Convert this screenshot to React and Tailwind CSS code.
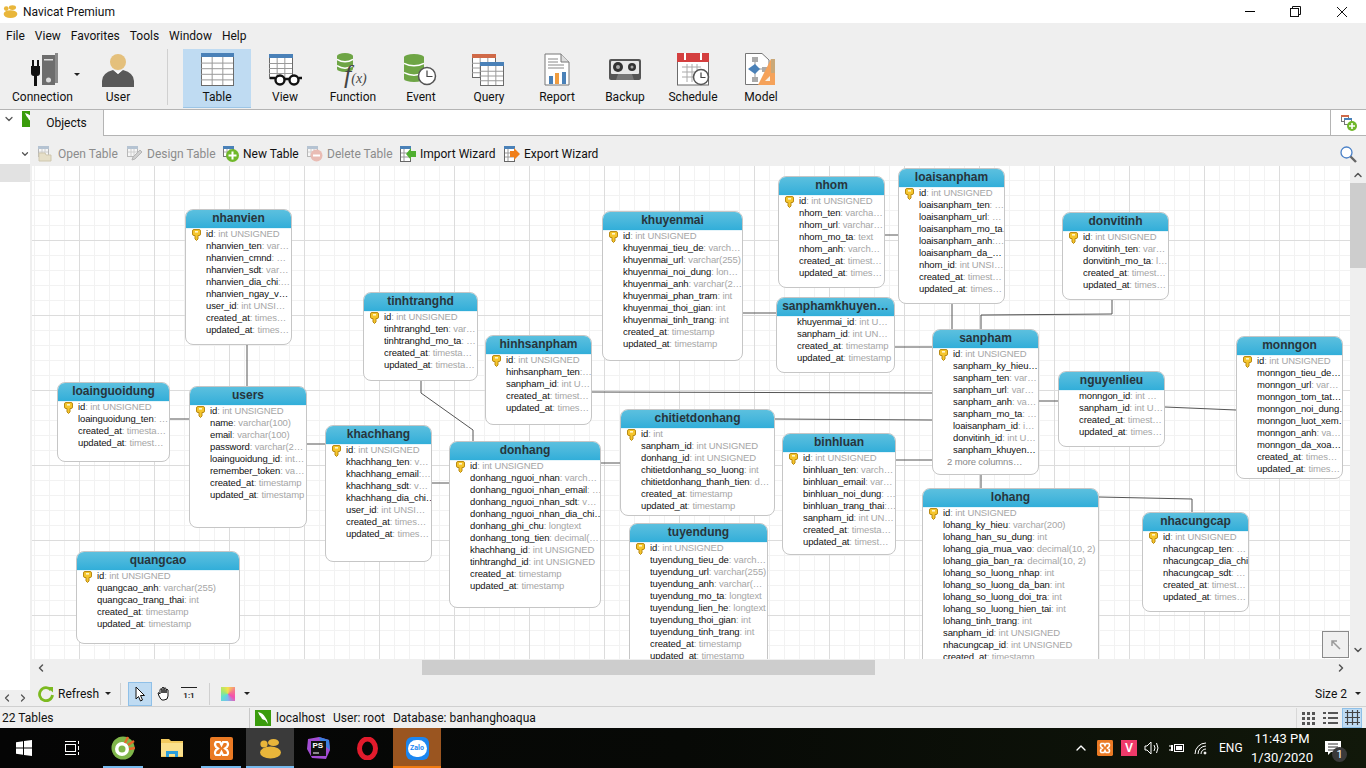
import React from "react";
import { ChevronDown, ChevronLeft, ChevronRight, ChevronUp } from "lucide-react";

const U = "id|: int UNSIGNED";

const NODES = [
  { t: "nhanvien", x: 185, y: 209, w: 107, h: 136, key: 1, rows: [U, "nhanvien_ten|: var…", "nhanvien_cmnd|: …", "nhanvien_sdt|: var…", "nhanvien_dia_chi|:…", "nhanvien_ngay_v…", "user_id|: int UNSI…", "created_at|: times…", "updated_at|: times…"] },
  { t: "loainguoidung", x: 57, y: 382, w: 113, h: 80, key: 1, rows: [U, "loainguoidung_ten|: …", "created_at|: timesta…", "updated_at|: timest…"] },
  { t: "users", x: 189, y: 386, w: 118, h: 142, key: 1, rows: [U, "name|: varchar(100)", "email|: varchar(100)", "password|: varchar(2…", "loainguoidung_id|: int…", "remember_token|: va…", "created_at|: timestamp", "updated_at|: timestamp"] },
  { t: "khachhang", x: 325, y: 425, w: 107, h: 137, key: 1, rows: [U, "khachhang_ten|: v…", "khachhang_email|:…", "khachhang_sdt|: v…", "khachhang_dia_chi…", "user_id|: int UNSI…", "created_at|: times…", "updated_at|: times…"] },
  { t: "quangcao", x: 76, y: 551, w: 164, h: 93, key: 1, rows: [U, "quangcao_anh|: varchar(255)", "quangcao_trang_thai|: int", "created_at|: timestamp", "updated_at|: timestamp"] },
  { t: "tinhtranghd", x: 363, y: 292, w: 115, h: 89, key: 1, rows: [U, "tinhtranghd_ten|: var…", "tinhtranghd_mo_ta|: …", "created_at|: timesta…", "updated_at|: timesta…"] },
  { t: "hinhsanpham", x: 485, y: 335, w: 107, h: 90, key: 1, rows: [U, "hinhsanpham_ten|:…", "sanpham_id|: int U…", "created_at|: timest…", "updated_at|: times…"] },
  { t: "khuyenmai", x: 602, y: 211, w: 141, h: 150, key: 1, rows: [U, "khuyenmai_tieu_de|: varch…", "khuyenmai_url|: varchar(255)", "khuyenmai_noi_dung|: lon…", "khuyenmai_anh|: varchar(2…", "khuyenmai_phan_tram|: int", "khuyenmai_thoi_gian|: int", "khuyenmai_tinh_trang|: int", "created_at|: timestamp", "updated_at|: timestamp"] },
  { t: "nhom", x: 778, y: 176, w: 107, h: 112, key: 1, rows: [U, "nhom_ten|: varcha…", "nhom_url|: varchar…", "nhom_mo_ta|: text", "nhom_anh|: varch…", "created_at|: timest…", "updated_at|: times…"] },
  { t: "sanphamkhuyen…", x: 776, y: 297, w: 119, h: 76, rows: ["khuyenmai_id|: int U…", "sanpham_id|: int UN…", "created_at|: timestamp", "updated_at|: timestamp"] },
  { t: "chitietdonhang", x: 620, y: 409, w: 155, h: 107, key: 1, rows: ["id|: int", "sanpham_id|: int UNSIGNED", "donhang_id|: int UNSIGNED", "chitietdonhang_so_luong|: int", "chitietdonhang_thanh_tien|: d…", "created_at|: timestamp", "updated_at|: timestamp"] },
  { t: "donhang", x: 449, y: 441, w: 152, h: 167, key: 1, rows: [U, "donhang_nguoi_nhan|: varch…", "donhang_nguoi_nhan_email|: …", "donhang_nguoi_nhan_sdt|: v…", "donhang_nguoi_nhan_dia_chi…", "donhang_ghi_chu|: longtext", "donhang_tong_tien|: decimal(…", "khachhang_id|: int UNSIGNED", "tinhtranghd_id|: int UNSIGNED", "created_at|: timestamp", "updated_at|: timestamp"] },
  { t: "tuyendung", x: 629, y: 523, w: 139, h: 151, key: 1, rows: [U, "tuyendung_tieu_de|: varch…", "tuyendung_url|: varchar(255)", "tuyendung_anh|: varchar(…", "tuyendung_mo_ta|: longtext", "tuyendung_lien_he|: longtext", "tuyendung_thoi_gian|: int", "tuyendung_tinh_trang|: int", "created_at|: timestamp", "updated_at|: timestamp"] },
  { t: "binhluan", x: 782, y: 433, w: 114, h: 122, key: 1, rows: [U, "binhluan_ten|: varch…", "binhluan_email|: var…", "binhluan_noi_dung|: …", "binhluan_trang_thai|:…", "sanpham_id|: int UN…", "created_at|: timesta…", "updated_at|: timest…"] },
  { t: "loaisanpham", x: 898, y: 168, w: 107, h: 136, key: 1, rows: [U, "loaisanpham_ten|: …", "loaisanpham_url|: …", "loaisanpham_mo_ta|.", "loaisanpham_anh|:…", "loaisanpham_da_…", "nhom_id|: int UNSI…", "created_at|: timest…", "updated_at|: times…"] },
  { t: "donvitinh", x: 1062, y: 212, w: 107, h: 88, key: 1, rows: [U, "donvitinh_ten|: var…", "donvitinh_mo_ta|: l…", "created_at|: timest…", "updated_at|: times…"] },
  { t: "sanpham", x: 932, y: 329, w: 107, h: 146, key: 1, more: 1, rows: [U, "sanpham_ky_hieu…", "sanpham_ten|: var…", "sanpham_url|: var…", "sanpham_anh|: va…", "sanpham_mo_ta|: …", "loaisanpham_id|: i…", "donvitinh_id|: int U…", "sanpham_khuyen…"] },
  { t: "nguyenlieu", x: 1058, y: 371, w: 107, h: 76, rows: ["monngon_id|: int …", "sanpham_id|: int U…", "created_at|: timest…", "updated_at|: times…"] },
  { t: "monngon", x: 1236, y: 336, w: 107, h: 143, key: 1, rows: [U, "monngon_tieu_de…", "monngon_url|: var…", "monngon_tom_tat…", "monngon_noi_dung…", "monngon_luot_xem…", "monngon_anh|: va…", "monngon_da_xoa…", "created_at|: times…", "updated_at|: times…"] },
  { t: "lohang", x: 922, y: 488, w: 177, h: 191, key: 1, rows: [U, "lohang_ky_hieu|: varchar(200)", "lohang_han_su_dung|: int", "lohang_gia_mua_vao|: decimal(10, 2)", "lohang_gia_ban_ra|: decimal(10, 2)", "lohang_so_luong_nhap|: int", "lohang_so_luong_da_ban|: int", "lohang_so_luong_doi_tra|: int", "lohang_so_luong_hien_tai|: int", "lohang_tinh_trang|: int", "sanpham_id|: int UNSIGNED", "nhacungcap_id|: int UNSIGNED", "created_at|: timestamp"] },
  { t: "nhacungcap", x: 1142, y: 512, w: 107, h: 100, key: 1, rows: [U, "nhacungcap_ten|: …", "nhacungcap_dia_chi", "nhacungcap_sdt|: …", "created_at|: timest…", "updated_at|: times…"] },
];

const LINKS = [
  "247,345 247,387",
  "170,419 189,419",
  "307,444 325,444",
  "432,483 449,483",
  "421,381 421,393 473,430 473,442",
  "592,392 932,393",
  "775,419 932,420",
  "601,463 620,463",
  "896,460 932,460",
  "743,313 776,313",
  "895,347 932,347",
  "885,235 898,235",
  "952,304 952,330",
  "1112,300 1112,314 981,315 981,330",
  "1039,401 1058,401",
  "1165,407 1236,410",
  "981,475 981,489",
  "1099,497 1192,499 1192,513",
];

const KeyIcon = () => (
  <svg width="9" height="12" viewBox="0 0 9 12" className="absolute left-[6px] top-[19px]">
    <path d="M0.5 2 Q0.5 0.5 2 0.5 H7 Q8.5 0.5 8.5 2 V5 Q8.5 6.5 7 6.5 H6 V10 L4.5 11.5 L3 10 V6.5 H2 Q0.5 6.5 0.5 5 Z" fill="#f5c52c" stroke="#b98a14" />
    <rect x="3" y="2" width="3" height="1.6" fill="#fff6c8" />
  </svg>
);

const TableNode = ({ node }) => (
  <div
    className="absolute flex flex-col overflow-hidden rounded-lg border border-[#c6c6c6] bg-white [font-family:'Liberation_Sans',sans-serif]"
    style={{ left: node.x - 32, top: node.y - 166, width: node.w, height: node.h }}
  >
    <div className="-mx-px -mt-px flex h-[20px] shrink-0 items-center justify-center border-b border-[#e4f4fa] bg-gradient-to-b from-[#5dc1df] to-[#31aed9] pb-px text-[12px] leading-none font-bold text-[#27353c]">
      {node.t}
    </div>
    {node.key && <KeyIcon />}
    <div className="-mt-px pl-5 text-[9.5px] leading-3 tracking-[-0.12px]">
      {node.rows.map((row) => {
        const [name, type] = row.split("|");
        return (
          <div key={row} className="h-3 overflow-hidden whitespace-nowrap">
            <span className="text-[#111]">{name}</span>
            <span className="text-[#a6a6a6]">{type}</span>
          </div>
        );
      })}
      {node.more && <div className="-ml-1.5 h-3 text-[#888]">2 more columns…</div>}
    </div>
  </div>
);

const Box = ({ children, w = 40, h = 36, vb }) => (
  <svg width={w} height={h} viewBox={vb || `0 0 ${w} ${h}`}>
    {children}
  </svg>
);

const GridTable = ({ x, y, w, h, band, cols = 3, rows = 4 }) => (
  <g>
    <rect x={x + 0.5} y={y + 0.5} width={w} height={h} fill="#fff" stroke="#6b6b6b" />
    <rect x={x} y={y} width={w + 1} height={4} fill={band} />
    {Array.from({ length: rows - 1 }).map((_, i) => (
      <line key={i} x1={x} x2={x + w} y1={y + 4.5 + ((i + 1) * (h - 4)) / rows} y2={y + 4.5 + ((i + 1) * (h - 4)) / rows} stroke="#9a9a9a" />
    ))}
    {Array.from({ length: cols - 1 }).map((_, i) => (
      <line key={i} y1={y + 4} y2={y + h} x1={x + 0.5 + ((i + 1) * w) / cols} x2={x + 0.5 + ((i + 1) * w) / cols} stroke="#9a9a9a" />
    ))}
  </g>
);

const Db = ({ x, y, w, h }) => (
  <g fill="#6ea545">
    <ellipse cx={x + w / 2} cy={y + 3} rx={w / 2} ry={3} />
    <rect x={x} y={y + 3} width={w} height={h - 6} />
    <ellipse cx={x + w / 2} cy={y + h - 3} rx={w / 2} ry={3} />
    <path d={`M${x} ${y + h / 3} q${w / 2} 5 ${w} 0`} stroke="#fff" strokeWidth="1.5" fill="none" />
    <path d={`M${x} ${y + (2 * h) / 3} q${w / 2} 5 ${w} 0`} stroke="#fff" strokeWidth="1.5" fill="none" />
  </g>
);

const Clock = ({ cx, cy, r }) => (
  <g>
    <circle cx={cx} cy={cy} r={r} fill="#fff" stroke="#555" strokeWidth="1.5" />
    <path d={`M${cx} ${cy - r + 3} V${cy + 0.5} H${cx + r - 3}`} stroke="#444" strokeWidth="1.2" fill="none" />
  </g>
);

const ConnectionIcon = () => (
  <Box w={36} h={34}>
    <path d="M8 5 h2 v6 h3 v-6 h2 v6 h1 v7 q0 3 -3 3 v10 h-3 v-10 q-3 0 -3 -3 v-7 h1z" fill="#111" transform="translate(-1,2)" />
    <rect x="17" y="2" width="13" height="30" fill="#6d6d6d" />
    <rect x="30" y="0" width="3" height="30" fill="#8a8a8a" />
    <rect x="19" y="6" width="9" height="1.5" fill="#ddd" />
    <circle cx="23.5" cy="27" r="2.5" fill="#ddd" />
  </Box>
);

const UserIcon = () => (
  <Box w={34} h={34}>
    <circle cx="17" cy="9" r="8" fill="#e4c07c" />
    <path d="M1 34 V28 Q1 20 12 17 L17 21 L22 17 Q33 20 33 28 V34 Z" fill="#595959" />
    <path d="M13 17 L17 21 L21 17 L17 19z" fill="#fff" />
  </Box>
);

const TableIcon = () => (
  <Box w={33} h={33}>
    <GridTable x={0} y={0} w={32} h={32} band="#4a81b8" cols={3} rows={5} />
  </Box>
);

const ViewIcon = () => (
  <Box w={34} h={34}>
    <GridTable x={1} y={1} w={23} h={24} band="#4a81b8" cols={3} rows={4} />
    <g stroke="#111" strokeWidth="2.4" fill="#fff">
      <circle cx="12" cy="27" r="4.5" />
      <circle cx="26" cy="27" r="4.5" />
      <path d="M16.5 26 h5 M7 25 h-5 M31 25 h3" fill="none" />
    </g>
  </Box>
);

const FunctionIcon = () => (
  <div className="relative h-[34px] w-[36px]">
    <Box w={36} h={34}>
      <Db x={2} y={0} w={16} h={19} />
    </Box>
    <span className="absolute top-[12px] left-[9px] leading-5 whitespace-nowrap text-[#444] italic [font-family:'Liberation_Serif',serif]">
      <span className="text-[26px]">f</span>
      <span className="text-[14px]">(x)</span>
    </span>
  </div>
);

const EventIcon = () => (
  <Box w={36} h={34}>
    <Db x={1} y={1} w={20} h={28} />
    <Clock cx={24} cy={23} r={8.5} />
  </Box>
);

const QueryIcon = () => (
  <Box w={34} h={34}>
    <GridTable x={0} y={1} w={23} h={23} band="#d06a48" />
    <GridTable x={8} y={9} w={23} h={23} band="#4a81b8" />
  </Box>
);

const ReportIcon = () => (
  <Box w={26} h={34}>
    <path d="M1 1 H17 L25 9 V32 H1 Z" fill="#fff" stroke="#777" />
    <path d="M17 1 V9 H25" fill="#ddd" stroke="#777" />
    <path d="M4 6 H14 M4 9 H14 M4 12 H20 M4 15 H20" stroke="#888" />
    <rect x="5" y="23" width="4" height="8" fill="#4a81b8" />
    <rect x="11" y="20" width="4" height="11" fill="#f09c3e" />
    <rect x="18" y="19" width="4" height="12" fill="#4a81b8" />
  </Box>
);

const BackupIcon = () => (
  <Box w={32} h={22}>
    <rect x="0" y="0" width="32" height="21" rx="2" fill="#555" />
    <rect x="2" y="2" width="28" height="13" rx="1" fill="#e8e8e8" />
    <circle cx="9" cy="8" r="5" fill="#333" />
    <circle cx="9" cy="8" r="2" fill="#aaa" />
    <circle cx="23" cy="8" r="4" fill="#333" />
    <circle cx="23" cy="8" r="1.5" fill="#aaa" />
    <path d="M7 21 L9 15 H23 L25 21" fill="#777" />
  </Box>
);

const ScheduleIcon = () => (
  <Box w={33} h={33}>
    <rect x="0.5" y="6" width="31" height="26" fill="#fff" stroke="#6b6b6b" />
    <rect x="0" y="0" width="32" height="9" fill="#d43f3f" />
    <rect x="7" y="0" width="2" height="7" fill="#fff" />
    <rect x="23" y="0" width="2" height="7" fill="#fff" />
    <path d="M5 14 H24 M5 19 H24 M5 24 H20 M10 11 V29 M15 11 V29 M20 11 V25" stroke="#aaa" />
    <Clock cx={24} cy={24} r={7.5} />
  </Box>
);

const ModelIcon = () => (
  <Box w={32} h={33}>
    <path d="M0.5 0.5 H17 L24 7 V31.5 H0.5 Z" fill="#fff" stroke="#777" />
    <rect x="7" y="4" width="6" height="5" fill="#aaa" />
    <rect x="7" y="24" width="6" height="5" fill="#aaa" />
    <rect x="17" y="14" width="6" height="5" fill="#aaa" />
    <path d="M10 9 V24 M10 16 H17" stroke="#999" />
    <path d="M10 11 L15 16 L10 21 L3 16 Z" fill="#4a81b8" />
    <path d="M26 6 H30 V32 H13 Z" fill="#f5a25a" />
    <path d="M26 6 H30 V20 H26Z" fill="#c9a878" />
    <path d="M25 23 V28 H20 Z" fill="#f7f0e6" />
  </Box>
);

const TOOLS = [
  ["Table", TableIcon, true],
  ["View", ViewIcon],
  ["Function", FunctionIcon],
  ["Event", EventIcon],
  ["Query", QueryIcon],
  ["Report", ReportIcon],
  ["Backup", BackupIcon],
  ["Schedule", ScheduleIcon],
  ["Model", ModelIcon],
];

const ToolButton = ({ label, Icon, active }) => (
  <div className={`flex h-[59px] w-[68px] flex-col items-center ${active ? "border-b border-[#9cc5e6] bg-[#bfdbf2]" : ""}`}>
    <div className="flex h-[38px] items-center pt-[3px]">
      <Icon />
    </div>
    <span className="mt-[2px] leading-4">{label}</span>
  </div>
);

const MiniTable = ({ band = "#6f8fb0", faded }) => (
  <g opacity={faded ? 0.45 : 1}>
    <rect x="0.5" y="0.5" width="10" height="10" fill="#fff" stroke="#777" />
    <rect x="0" y="0" width="11" height="3" fill={band} />
    <path d="M1 6 H10 M4 3 V10 M7 3 V10" stroke="#aaa" />
  </g>
);

const OpenIcon = () => (
  <Box w={16} h={16}>
    <MiniTable faded />
    <path d="M1 7 H7 L8 9 H13 V15 H1 Z" fill="#e6dfc8" stroke="#cfc7ae" />
  </Box>
);
const DesignIcon = () => (
  <Box w={16} h={16}>
    <MiniTable faded />
    <path d="M5 14 L6 11 L13 4 L15 6 L8 13 Z" fill="#cfcfcf" stroke="#b5b5b5" />
  </Box>
);
const NewIcon = () => (
  <Box w={16} h={16}>
    <MiniTable band="#4a81b8" />
    <circle cx="9.5" cy="9.5" r="6.5" fill="#70b82a" />
    <path d="M9.5 5.5 V13.5 M5.5 9.5 H13.5" stroke="#fff" strokeWidth="2" />
  </Box>
);
const DeleteIcon = () => (
  <Box w={16} h={16}>
    <MiniTable faded />
    <circle cx="9.5" cy="9.5" r="6" fill="#e9bcb4" />
    <path d="M6 9.5 H13" stroke="#fff" strokeWidth="2" />
  </Box>
);
const ImportIcon = () => (
  <Box w={16} h={17}>
    <rect x="0.5" y="0.5" width="10" height="15" fill="#fff" stroke="#666" />
    <rect x="0" y="0" width="11" height="3" fill="#4a81b8" />
    <path d="M1 7 H10 M1 11 H10 M4 3 V15" stroke="#999" />
    <path d="M16 5 V11 H11 V14 L6 8 L11 2 V5 Z" fill="#4fae30" />
  </Box>
);
const ExportIcon = () => (
  <Box w={16} h={17}>
    <rect x="0.5" y="0.5" width="10" height="15" fill="#fff" stroke="#666" />
    <rect x="0" y="0" width="11" height="3" fill="#4a81b8" />
    <path d="M1 7 H10 M1 11 H10 M4 3 V15" stroke="#999" />
    <path d="M6 5 V11 H10 V14 L16 8 L10 2 V5 Z" fill="#f07f1a" />
  </Box>
);

const ACTIONS = [
  ["Open Table", OpenIcon, true, "w-[89px]"],
  ["Design Table", DesignIcon, true, "w-[96px]"],
  ["New Table", NewIcon, false, "w-[84px]"],
  ["Delete Table", DeleteIcon, true, "w-[93px]"],
  ["Import Wizard", ImportIcon, false, "w-[104px]"],
  ["Export Wizard", ExportIcon, false, "w-[100px]"],
];

const MysqlBadge = ({ className }) => (
  <svg viewBox="0 0 16 16" className={className}>
    <rect width="16" height="16" fill="#3a9c0c" />
    <path d="M3 2 Q8 3 10 7 Q12 9 13 14 L10 10 Q7 10 6 7 Q4 5 3 2Z" fill="#fff" />
  </svg>
);

const Dropdown = ({ className = "" }) => (
  <span className={`inline-block h-0 w-0 border-x-[3px] border-t-[3px] border-x-transparent border-t-[#222] ${className}`} />
);

const WinIcon = () => (
  <svg width="16" height="16" viewBox="0 0 16 16" fill="#fff">
    <path d="M0 2.2 L7 1.2 V7.5 H0 Z M8 1 L16 0 V7.5 H8 Z M0 8.5 H7 V14.8 L0 13.8 Z M8 8.5 H16 V16 L8 15 Z" />
  </svg>
);

const TaskView = () => (
  <svg width="16" height="16" viewBox="0 0 16 16" fill="none" stroke="#fff">
    <rect x="1.5" y="4.5" width="10" height="7" />
    <path d="M1 1.5 H12 M1 14.5 H12 M14.5 1 V4 M14.5 6 V10 M14.5 12 V15" />
  </svg>
);

const CocCoc = () => (
  <svg width="24" height="24" viewBox="0 0 24 24">
    <circle cx="12" cy="12" r="11.5" fill="#7fb54a" />
    <circle cx="11" cy="13" r="7" fill="#fff" />
    <circle cx="11" cy="13" r="3.5" fill="#7fb54a" />
    <path d="M14 7 L17 1 M17 9 L23 5 M18 13 L24 12" stroke="#e8662a" strokeWidth="2.4" />
  </svg>
);

const Folder = () => (
  <svg width="22" height="20" viewBox="0 0 22 20">
    <path d="M0 1 H8 L10 3 H22 V19 H0 Z" fill="#f3ca5f" />
    <rect x="0" y="5" width="22" height="13" fill="#fbe08d" />
    <path d="M5 19 V13 H17 V19 H14 V16 H8 V19 Z" fill="#2d9fdc" />
  </svg>
);

const Xampp = ({ size = 23 }) => (
  <svg width={size} height={size} viewBox="0 0 23 23">
    <rect width="23" height="23" rx="2" fill="#ea7a24" />
    <path d="M6 5 H10 L11.5 8 L13 5 H17 Q19 7 17 10 L15 11.5 L17 13 Q19 16 17 18 H13 L11.5 15 L10 18 H6 Q4 16 6 13 L8 11.5 L6 10 Q4 7 6 5 Z" fill="none" stroke="#fff" strokeWidth="2.2" />
  </svg>
);

const NavicatLogo = ({ size = 23 }) => (
  <svg width={size} height={size} viewBox="0 0 23 20">
    <ellipse cx="11.5" cy="14" rx="10.5" ry="6" fill="#e9b63a" />
    <ellipse cx="5" cy="5.5" rx="3.6" ry="3.6" fill="#e9b63a" />
    <ellipse cx="14.5" cy="4" rx="5.5" ry="3.6" fill="#e9b63a" />
  </svg>
);

const PhpStorm = () => (
  <div className="relative h-[22px] w-[23px]">
    <svg width="23" height="22" viewBox="0 0 23 22" className="absolute">
      <path d="M1 2 L12 0 L22 3 L23 13 L19 22 L5 21 L0 12 Z" fill="#a34dd4" />
      <path d="M12 0 L22 3 L23 13 L14 6 Z" fill="#3b7fe0" />
      <rect x="4" y="4" width="15" height="15" fill="#111" />
      <rect x="6" y="15.5" width="6" height="1" fill="#fff" />
    </svg>
    <span className="absolute top-[4px] left-[6px] text-[8px] leading-[10px] font-bold text-white [font-family:'Liberation_Sans',sans-serif]">PS</span>
  </div>
);

const Opera = () => (
  <svg width="23" height="23" viewBox="0 0 23 23">
    <ellipse cx="11.5" cy="11.5" rx="8" ry="9.5" fill="none" stroke="#e21b2c" strokeWidth="5" />
  </svg>
);

const Zalo = () => (
  <div className="flex h-[23px] w-[23px] items-center justify-center rounded-md bg-[#1c86f0]">
    <div className="flex h-[17px] w-[19px] items-center justify-center rounded-full bg-white text-[7px] font-bold text-[#1c86f0]">Zalo</div>
  </div>
);

const TaskItem = ({ children, w, mark, bg = "" }) => (
  <div className={`relative flex h-full items-center justify-center ${w} ${bg}`}>
    {children}
    {mark && <div className={`absolute inset-x-0 bottom-0 h-[2px] ${mark}`} />}
  </div>
);

export default function App() {
  return (
    <div className="flex h-[768px] w-[1366px] flex-col overflow-hidden bg-[#efefef] text-[12px] text-[#111] [font-family:'Roboto','Noto_Sans',sans-serif]">
      {/* title bar */}
      <div className="flex h-[23px] shrink-0 items-center bg-white">
        <div className="ml-[3px] w-[20px]">
          <NavicatLogo size={15} />
        </div>
        <span className="pt-px">Navicat Premium</span>
        <div className="ml-auto flex items-center">
          <div className="mr-[35px] h-px w-[10px] bg-black" />
          <svg width="11" height="11" viewBox="0 0 11 11" fill="none" stroke="#111" className="mr-[35px]">
            <rect x="0.5" y="2.5" width="8" height="8" />
            <path d="M2.5 2.5 V0.5 H10.5 V8.5 H8.5" />
          </svg>
          <svg width="12" height="12" viewBox="0 0 12 12" stroke="#111" className="mr-[18px]">
            <path d="M1 1 L11 11 M11 1 L1 11" />
          </svg>
        </div>
      </div>

      {/* menu */}
      <div className="flex h-[22px] shrink-0 items-center gap-[10px] pt-[4px] pl-[6px]">
        {["File", "View", "Favorites", "Tools", "Window", "Help"].map((m) => (
          <span key={m}>{m}</span>
        ))}
      </div>

      {/* main toolbar */}
      <div className="flex h-[65px] shrink-0 items-start border-b border-[#b4b4b4] pt-[4px]">
        <div className="relative flex w-[85px] flex-col items-center">
          <div className="flex h-[38px] items-center pt-[3px]">
            <ConnectionIcon />
          </div>
          <span className="mt-[2px] leading-4">Connection</span>
          <Dropdown className="absolute top-[24px] right-[5px]" />
        </div>
        <div className="flex w-[66px] flex-col items-center">
          <div className="flex h-[38px] items-center pt-[3px]">
            <UserIcon />
          </div>
          <span className="mt-[2px] leading-4">User</span>
        </div>
        <div className="ml-[16px] h-[56px] w-px bg-[#d0d0d0]" />
        <div className="ml-[15px] flex">
          {TOOLS.map(([label, Icon, active]) => (
            <ToolButton key={label} label={label} Icon={Icon} active={active} />
          ))}
        </div>
      </div>

      <div className="flex min-h-0 flex-1">
        {/* connection tree */}
        <aside className="flex w-[30px] shrink-0 flex-col overflow-hidden">
          <div className="flex h-[580px] flex-col bg-white">
            <div className="flex h-[17px] items-center overflow-hidden">
              <ChevronDown size={12} strokeWidth={2.5} className="ml-[3px] shrink-0 text-[#555]" />
              <MysqlBadge className="ml-[7px] h-[16px] w-[16px] shrink-0" />
            </div>
            <div className="mt-[19px] flex h-[16px] items-center pl-[20px]">
              <ChevronDown size={12} strokeWidth={3} className="text-[#555]" />
            </div>
            <div className="mt-[2px] h-[18px] bg-[#e2e2e2]" />
          </div>
          <div className="flex flex-1 items-start gap-[4px] pt-[2px] pl-[1px] text-[#555]">
            <ChevronLeft size={12} strokeWidth={2.5} />
            <ChevronRight size={12} strokeWidth={2.5} />
          </div>
        </aside>

        <div className="flex min-w-0 flex-1 flex-col">
          {/* tabs */}
          <div className="flex h-[26px] shrink-0">
            <div className="flex w-[73px] items-center justify-center">Objects</div>
            <div className="flex-1 border-b border-l border-[#b4b4b4] bg-white" />
            <div className="flex w-[36px] items-center justify-center border-b border-l border-[#b4b4b4] bg-white">
              <svg width="16" height="16" viewBox="0 0 16 16">
                <rect x="0.5" y="0.5" width="7" height="6" fill="#fff" stroke="#777" />
                <rect x="0" y="0" width="8" height="2" fill="#d06a48" />
                <rect x="3.5" y="3.5" width="7" height="6" fill="#fff" stroke="#777" />
                <rect x="3" y="3" width="8" height="2" fill="#4a81b8" />
                <circle cx="11" cy="11" r="5" fill="#70b82a" />
                <path d="M11 8 V14 M8 11 H14" stroke="#fff" strokeWidth="1.6" />
              </svg>
            </div>
          </div>

          {/* object actions */}
          <div className="flex h-[30px] shrink-0 items-center pt-[6px] pl-[8px]">
            {ACTIONS.map(([label, Icon, disabled, w]) => (
              <div key={label} className={`flex items-center gap-[4px] ${w} ${disabled ? "text-[#8c8c8c]" : ""}`}>
                <Icon />
                <span className="whitespace-nowrap">{label}</span>
              </div>
            ))}
            <svg width="17" height="17" viewBox="0 0 17 17" fill="none" className="mr-[9px] ml-auto">
              <circle cx="6.5" cy="6.5" r="5.5" stroke="#4a81c8" strokeWidth="1.3" fill="#fff" />
              <path d="M10.5 10.5 L16 16" stroke="#666" strokeWidth="2.4" />
            </svg>
          </div>

          {/* canvas + scrollbar */}
          <div className="flex h-[493px] shrink-0 pl-[2px]">
            <div className="relative min-w-0 flex-1 overflow-hidden bg-white [background-image:linear-gradient(#dcdcdc_1px,transparent_1px),linear-gradient(90deg,#dcdcdc_1px,transparent_1px),linear-gradient(#f2f2f2_1px,transparent_1px),linear-gradient(90deg,#f2f2f2_1px,transparent_1px)] [background-position:47px_74px,47px_74px,2px_14px,2px_14px] [background-size:75px_75px,75px_75px,15px_15px,15px_15px]">
              <svg className="absolute inset-0" width="1318" height="493" viewBox="32 166 1318 493" fill="none" stroke="#555">
                {LINKS.map((p) => (
                  <polyline key={p} points={p} />
                ))}
              </svg>
              {NODES.map((n) => (
                <TableNode key={n.t} node={n} />
              ))}
              <div className="absolute right-px bottom-px flex h-[27px] w-[27px] items-center justify-center border border-[#8a8a8a] bg-[#f0f0f0]">
                <svg width="10" height="10" viewBox="0 0 10 10" fill="none" stroke="#9a9a9a" strokeWidth="1.5">
                  <path d="M1 6 V1 H6 M1 1 L9 9" />
                </svg>
              </div>
            </div>
            <div className="flex w-[16px] shrink-0 flex-col items-center">
              <ChevronUp size={12} strokeWidth={3} className="mt-[3px] text-[#555]" />
              <div className="mt-[2px] h-[85px] w-full bg-[#cdcdcd]" />
              <ChevronDown size={12} strokeWidth={3} className="mt-auto mb-[3px] text-[#555]" />
            </div>
          </div>

          {/* horizontal scrollbar */}
          <div className="flex h-[17px] shrink-0 items-center pr-[19px] pl-[5px]">
            <ChevronLeft size={12} strokeWidth={3} className="text-[#555]" />
            <div className="ml-[375px] h-[15px] w-[453px] bg-[#cdcdcd]" />
            <ChevronRight size={12} strokeWidth={3} className="ml-auto text-[#555]" />
          </div>

          {/* canvas tools */}
          <div className="flex h-[30px] shrink-0 items-center pt-[5px] pl-[8px]">
            <svg width="16" height="16" viewBox="0 0 16 16" fill="none">
              <path d="M13 4 A6.5 6.5 0 1 0 14.5 9" stroke="#7cba20" strokeWidth="2.8" />
              <path d="M9 1 H15 V6.5 Z" fill="#7cba20" />
            </svg>
            <span className="ml-[4px] w-[38px] whitespace-nowrap">Refresh</span>
            <Dropdown className="ml-[9px]" />
            <div className="ml-[9px] h-[22px] w-px bg-[#d0d0d0]" />
            <div className="ml-[7px] flex h-[24px] w-[24px] items-center justify-center border border-[#8fc0e8] bg-[#bfdbf2]">
              <svg width="11" height="16" viewBox="0 0 11 16">
                <path d="M1 1 V13 L3.5 10.5 L5.5 15 L7.5 14 L5.5 9.5 H9.5 Z" fill="#fff" stroke="#111" />
              </svg>
            </div>
            <svg width="15" height="15" viewBox="0 0 15 15" fill="#fff" stroke="#111" className="ml-[5px]">
              <path d="M3 8 V3.5 q1 -1.5 2 0 V7 V2 q1 -1.5 2 0 V7 V2.5 q1 -1.5 2 0 V7 V4 q1 -1.5 2 0 V10 q0 4 -4 4 h-2 Q4 14 2 10 L1 7 q1 -1 2 1z" />
            </svg>
            <div className="ml-[9px] flex w-[16px] flex-col items-center">
              <div className="h-[1.5px] w-full bg-[#222]" />
              <span className="mt-[3px] text-[8px] leading-[9px] font-semibold">1:1</span>
            </div>
            <div className="ml-[12px] h-[22px] w-px bg-[#d0d0d0]" />
            <div className="ml-[11px] h-[14px] w-[14px] bg-[conic-gradient(#f8e04a,#f57a8c,#f44fb0,#7fb8f0,#5fe0d0,#a8e86a,#f8e04a)]" />
            <Dropdown className="ml-[9px]" />
            <span className="ml-auto">Size 2</span>
            <Dropdown className="mr-[5px] ml-[8px]" />
          </div>
        </div>
      </div>

      {/* status bar */}
      <div className="flex h-[22px] shrink-0 items-center border-t border-[#d0d0d0]">
        <span className="w-[249px] pl-[2px]">22 Tables</span>
        <div className="h-[20px] w-px bg-[#c8c8c8]" />
        <MysqlBadge className="ml-[5px] h-[16px] w-[16px]" />
        <span className="ml-[5px] whitespace-nowrap">localhost</span>
        <span className="ml-[8px] whitespace-nowrap">User: root</span>
        <span className="ml-[8px] whitespace-nowrap">Database: banhanghoaqua</span>
        <div className="ml-auto h-[20px] w-px bg-[#d8d8d8]" />
        <svg width="14" height="14" viewBox="0 0 14 14" fill="#555" className="ml-[5px]">
          <path d="M0 1 h3 v3 h-3z M5 1 h3 v3 h-3z M10 1 h3 v3 h-3z M0 6 h3 v3 h-3z M5 6 h3 v3 h-3z M10 6 h3 v3 h-3z M0 11 h3 v3 h-3z M5 11 h3 v3 h-3z M10 11 h3 v3 h-3z" />
        </svg>
        <svg width="15" height="14" viewBox="0 0 15 14" fill="#555" className="ml-[7px]">
          <path d="M0 1 h3 v2 h-3z M5 1 h10 v2 h-10z M0 6 h3 v2 h-3z M5 6 h10 v2 h-10z M0 11 h3 v2 h-3z M5 11 h10 v2 h-10z" />
        </svg>
        <div className="mr-[4px] ml-[4px] flex h-[20px] w-[20px] items-center justify-center border border-[#8fc0e8] bg-[#bfdbf2]">
          <svg width="15" height="15" viewBox="0 0 15 15" stroke="#444" strokeWidth="1.2">
            <path d="M0 2.5 H15 M0 7.5 H15 M0 12.5 H15 M2.5 0 V15 M7.5 0 V15 M12.5 0 V15" />
          </svg>
        </div>
      </div>

      {/* taskbar */}
      <div className="flex h-[40px] shrink-0 items-center bg-gradient-to-r from-[#050505] via-[#070906] to-[#11180a] text-white">
        <TaskItem w="w-[48px]"><WinIcon /></TaskItem>
        <TaskItem w="w-[48px]"><TaskView /></TaskItem>
        <div className="w-[7px]" />
        <TaskItem w="w-[40px]" mark="bg-[#76b9ed]"><CocCoc /></TaskItem>
        <TaskItem w="w-[58px]"><Folder /></TaskItem>
        <TaskItem w="w-[40px]" mark="bg-[#76b9ed]"><Xampp /></TaskItem>
        <div className="w-[5px]" />
        <TaskItem w="w-[48px]" mark="bg-[#76b9ed]" bg="bg-[#3a3a3a]"><NavicatLogo /></TaskItem>
        <TaskItem w="w-[48px]"><PhpStorm /></TaskItem>
        <TaskItem w="w-[51px]"><Opera /></TaskItem>
        <TaskItem w="w-[48px]" mark="bg-[#f07a10]" bg="bg-[#9a5520]"><Zalo /></TaskItem>

        <div className="ml-auto flex h-full items-center">
          <ChevronUp size={16} className="mr-[8px]" />
          <Xampp size={16} />
          <div className="ml-[8px] flex h-[16px] w-[16px] items-center justify-center bg-[#ef3a6a] text-[12px] leading-none font-bold [font-family:'Liberation_Sans',sans-serif]">V</div>
          <svg width="16" height="14" viewBox="0 0 16 14" fill="none" stroke="#fff" className="ml-[7px]">
            <path d="M1 5 H3 L7 1 V13 L3 9 H1 Z M10 4 Q12 7 10 10 M12.5 2 Q15.5 7 12.5 12" />
          </svg>
          <svg width="16" height="10" viewBox="0 0 16 10" className="ml-[9px]">
            <path d="M0 3 H2 M0 7 H2" stroke="#fff" />
            <rect x="2" y="2" width="2" height="6" fill="#fff" />
            <rect x="5.5" y="1.5" width="9" height="7" fill="#111" stroke="#fff" />
            <rect x="7" y="3" width="6" height="4" fill="#fff" />
          </svg>
          <svg width="16" height="13" viewBox="0 0 16 13" fill="none" stroke="#fff" className="ml-[9px]">
            <path d="M1 12 A11 11 0 0 1 12 1 M4 12 A8 8 0 0 1 12 4 M7 12 A5 5 0 0 1 12 7" />
            <circle cx="11" cy="11" r="1" fill="#fff" />
          </svg>
          <span className="ml-[9px] w-[30px]">ENG</span>
          <div className="flex w-[66px] flex-col items-center text-[13px] leading-[19px]">
            <span>11:43 PM</span>
            <span>1/30/2020</span>
          </div>
          <div className="relative mr-[25px] ml-[10px]">
            <svg width="16" height="15" viewBox="0 0 16 15">
              <path d="M0 0 H16 V11 H6 L3 14 V11 H0 Z" fill="#fff" />
              <path d="M3 3 H13 M3 6 H13 M3 9 H13" stroke="#333" />
            </svg>
            <div className="absolute top-[6px] left-[7px] flex h-[15px] w-[15px] items-center justify-center rounded-full bg-[#3a3a3a] text-[11px] leading-none">1</div>
          </div>
        </div>
      </div>
    </div>
  );
}
